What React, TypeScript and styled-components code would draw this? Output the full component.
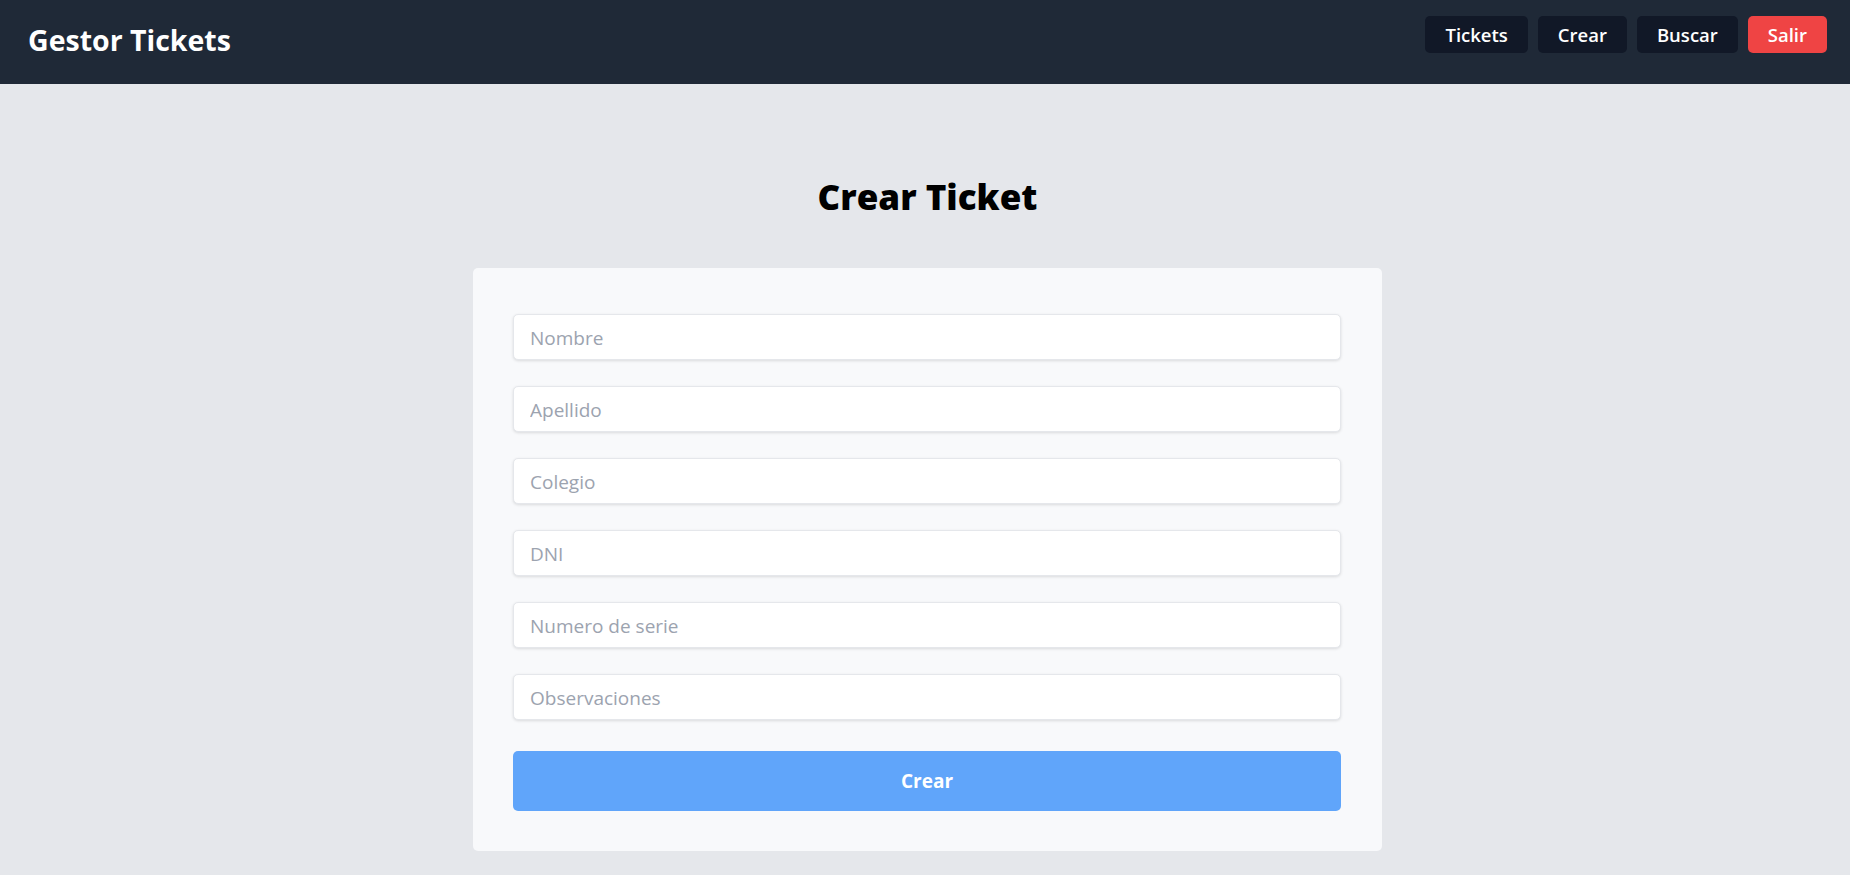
import React from "react";
import styled, { createGlobalStyle } from "styled-components";

const Global = createGlobalStyle`
  html, body { margin: 0; padding: 0; }
  body {
    background: #e5e7eb;
    font-family: "Open Sans", "Noto Sans", sans-serif;
    color: #000;
  }
  * { box-sizing: border-box; }
`;

const Header = styled.header`
  height: 84px;
  background: #1f2937;
  display: flex;
  align-items: center;
  justify-content: space-between;
  padding: 0 23px 0 28px;
`;

const Brand = styled.div`
  color: #fff;
  font-size: 28.5px;
  font-weight: 700;
  margin-top: -4px;
`;

const Nav = styled.nav`
  display: flex;
  gap: 10px;
  margin-top: -16px;
`;

const NavButton = styled.button<{ $danger?: boolean }>`
  height: 37px;
  padding: 0 20px;
  border: none;
  border-radius: 5px;
  background: ${(p) => (p.$danger ? "#ef4444" : "#111827")};
  color: #fff;
  font-family: inherit;
  font-size: 18.5px;
  font-weight: 600;
  cursor: pointer;
`;

const Main = styled.main`
  padding: 91px 0 24px 5px;
  display: flex;
  flex-direction: column;
  align-items: center;
`;

const Title = styled.h1`
  margin: 0 0 49px;
  font-size: 35px;
  line-height: 44px;
  font-weight: 800;
  color: #000;
  text-align: center;
`;

const Card = styled.form`
  width: 909px;
  background: #f8f9fb;
  border-radius: 5px;
  padding: 46px 41px 40px 40px;
  display: flex;
  flex-direction: column;
  gap: 26px;
`;

const Field = styled.input`
  height: 46px;
  width: 100%;
  border: 1px solid #e5e7eb;
  border-radius: 5px;
  background: #fff;
  box-shadow: 0 1px 3px rgba(0, 0, 0, 0.12);
  padding: 1px 16px 0;
  font-family: inherit;
  font-size: 19px;
  color: #111827;
  outline: none;
  &::placeholder { color: #9ca3af; }
`;

const Submit = styled.button`
  margin-top: 5px;
  height: 60px;
  width: 100%;
  border: none;
  border-radius: 5px;
  background: #60a5fa;
  color: #fff;
  font-family: inherit;
  font-size: 19px;
  font-weight: 700;
  cursor: pointer;
`;

const fields = ["Nombre", "Apellido", "Colegio", "DNI", "Numero de serie", "Observaciones"];

export default function App() {
  return (
    <>
      <Global />
      <Header>
        <Brand>Gestor Tickets</Brand>
        <Nav>
          <NavButton>Tickets</NavButton>
          <NavButton>Crear</NavButton>
          <NavButton>Buscar</NavButton>
          <NavButton $danger>Salir</NavButton>
        </Nav>
      </Header>
      <Main>
        <Title>Crear Ticket</Title>
        <Card onSubmit={(e) => e.preventDefault()}>
          {fields.map((f) => (
            <Field key={f} placeholder={f} />
          ))}
          <Submit type="submit">Crear</Submit>
        </Card>
      </Main>
    </>
  );
}
